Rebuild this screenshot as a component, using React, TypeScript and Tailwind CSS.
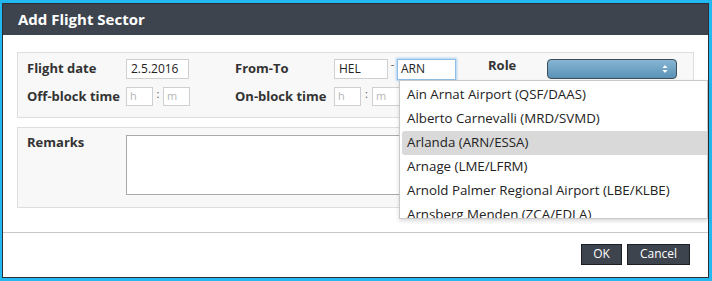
import React from "react";

const font = { fontFamily: '"Open Sans", "DejaVu Sans", sans-serif' };

function SmallInput({ ph, w }: { ph: string; w: string }) {
  return (
    <div className={`${w} h-[19px] border border-[#cfcfcf] bg-white flex items-center pl-[3px] text-[11px] text-[#b5b5b5]`}>
      {ph}
    </div>
  );
}

export default function App() {
  const items = [
    "Ain Arnat Airport (QSF/DAAS)",
    "Alberto Carnevalli (MRD/SVMD)",
    "Arlanda (ARN/ESSA)",
    "Arnage (LME/LFRM)",
    "Arnold Palmer Regional Airport (LBE/KLBE)",
    "Arnsberg Menden (ZCA/EDLA)",
  ];
  return (
    <div className="w-[712px] h-[281px] bg-[#22b9f2] pt-[3px] pl-[2px] pr-[3px] pb-[3px] relative" style={font}>
      <div className="w-full h-full bg-white border border-[#2a2f36] flex flex-col">
        <div className="h-[31px] shrink-0 bg-[#3d444e] flex items-center pl-[15px]">
          <span className="text-white font-bold text-[15px]">Add Flight Sector</span>
        </div>
        <div className="flex-1 flex flex-col pt-[17px] pl-[14px] pr-[14px]">
          <div className="h-[66px] bg-[#f8f8f8] border border-[#dedede] pl-[9px] pt-[6px] flex flex-col gap-[8px] text-[#333]">
            <div className="flex items-center h-[20px]">
              <div className="w-[99px] font-bold text-[13px]">Flight date</div>
              <div className="w-[63px] h-[20px] border border-[#cfcfcf] bg-white flex items-center pl-[4px] text-[12px] text-[#222]">2.5.2016</div>
              <div className="w-[46px]" />
              <div className="w-[99px] font-bold text-[13px]">From-To</div>
              <div className="w-[54px] h-[20px] border border-[#cfcfcf] bg-white flex items-center pl-[4px] text-[12px] text-[#222]">HEL</div>
              <div className="w-[9px] flex justify-center text-[11px] text-[#555] -mt-[9px]">-</div>
              <div className="w-[59px] h-[21px] border border-[#8fbfe6] shadow-[0_0_2px_1px_#a9d1f2] bg-white flex items-center pl-[3px] text-[12px] text-[#222]">ARN</div>
              <div className="w-[32px]" />
              <div className="w-[59px] font-bold text-[13px] -mt-[6px]">Role</div>
              <div className="w-[130px] h-[20px] rounded-[4px] border border-[#3e4d58] bg-gradient-to-b from-[#86b5d3] to-[#5a92b6] flex items-center justify-end pr-[8px]">
                <svg width="6" height="10" viewBox="0 0 6 10">
                  <path d="M3 1 L5.5 4 L0.5 4 Z" fill="#ffffff" />
                  <path d="M3 9 L5.5 6 L0.5 6 Z" fill="#ffffff" />
                </svg>
              </div>
            </div>
            <div className="flex items-center h-[19px]">
              <div className="w-[99px] font-bold text-[13px]">Off-block time</div>
              <SmallInput ph="h" w="w-[27px]" />
              <div className="w-[10px] flex justify-center text-[11px] text-[#555] -mt-[4px]">:</div>
              <SmallInput ph="m" w="w-[27px]" />
              <div className="w-[45px]" />
              <div className="w-[99px] font-bold text-[13px]">On-block time</div>
              <SmallInput ph="h" w="w-[27px]" />
              <div className="w-[11px] flex justify-center text-[11px] text-[#555] -mt-[4px]">:</div>
              <SmallInput ph="m" w="w-[30px]" />
            </div>
          </div>
          <div className="mt-[9px] h-[81px] bg-[#f8f8f8] border border-[#dedede] pl-[9px] pt-[7px] flex text-[#333]">
            <div className="w-[99px] font-bold text-[13px] leading-[14px]">Remarks</div>
            <div className="w-[560px] h-[60px] border border-[#a9a9a9] bg-white" />
          </div>
        </div>
        <div className="h-[45px] shrink-0 border-t border-[#c8c8c8] flex items-center justify-end gap-[5px] pr-[18px] pb-[2px]">
          <div className="w-[41px] h-[21px] bg-[#3d444e] border border-[#1b1f24] text-white text-[12px] flex items-center justify-center">OK</div>
          <div className="w-[63px] h-[21px] bg-[#3d444e] border border-[#1b1f24] text-white text-[12px] flex items-center justify-center">Cancel</div>
        </div>
      </div>
      <div className="absolute left-[399px] top-[80px] w-[309px] h-[139px] bg-white border border-[#c9c9c9] shadow-[0_2px_4px_rgba(0,0,0,0.15)] overflow-hidden pt-[2px] pl-[2px]">
        {items.map((t, i) => (
          <div
            key={t}
            className={`h-[24px] flex items-center pl-[5px] text-[13.3px] text-[#222] whitespace-nowrap ${i === 2 ? "bg-[#d9d9d9] rounded-l-[3px]" : ""}`}
          >
            {t}
          </div>
        ))}
      </div>
    </div>
  );
}
